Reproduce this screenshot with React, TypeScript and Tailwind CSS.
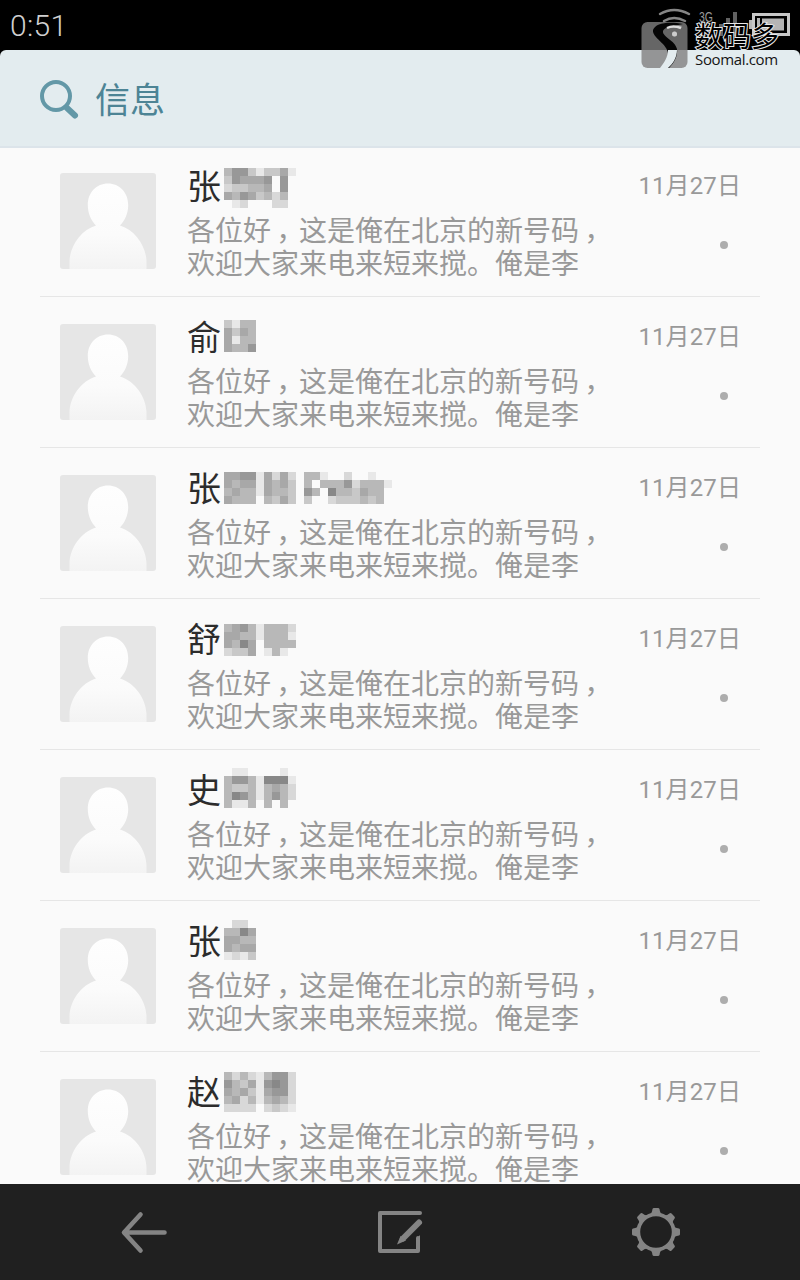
import { ReactNode } from "react"

type Thread = {
  name: string
  // shift of the mosaic inside the name line
  offset: number
  // one hex digit per 8px cell, f is left empty
  mosaic: string[]
}

const threads: Thread[] = [
  { name: "张", offset: 4, mosaic: ["b99ceccae", "c9aaa9f9f", "dccbbaf9f", "ab9acbdbf", "fedfffddf"] },
  { name: "俞", offset: 5, mosaic: ["cebb", "acab", "aebb", "abb9"] },
  {
    name: "张",
    offset: 6,
    mosaic: ["aa99eadadfbbeffdffeff", "abaaeabacfbfbbb9dbbbe", "babbeabbcf9bf8bbcabbf", "abbbfbcacfcffdcccbcbf"],
  },
  { name: "舒", offset: 7, mosaic: ["ba9bebbbd", "aabbebbbe", "ab8afbbbb", "dccafebef"] },
  { name: "史", offset: 0, mosaic: ["feeffffef", "b99be888e", "bccbebabd", "b89beb9bd", "beebfbfbf"] },
  { name: "张", offset: 1, mosaic: ["fddf", "bb8a", "aabb", "abaa", "edec"] },
  { name: "赵", offset: 2, mosaic: ["bdbdeb99d", "9bcae989d", "abacea99d", "badbebabd", "ddddfdcde"] },
]

function Mosaic({ rows, offset }: { rows: string[]; offset: number }) {
  return (
    <div style={{ marginTop: offset }}>
      {rows.map((row, y) => (
        <div key={y} className="flex h-2">
          {row.split("").map((c, x) => (
            <div
              key={x}
              className="h-2 w-2"
              style={{ backgroundColor: c === "f" ? "transparent" : `#${c}8${c}8${c}8` }}
            />
          ))}
        </div>
      ))}
    </div>
  )
}

function Avatar() {
  return (
    <svg className="mt-[27px] h-24 w-24 shrink-0 rounded-[3px]" viewBox="0 0 96 96">
      <defs>
        <linearGradient id="body" x1="0" y1="0" x2="0" y2="1">
          <stop offset="0" stopColor="#fefefe" />
          <stop offset="0.6" stopColor="#fbfbfb" />
          <stop offset="1" stopColor="#f3f3f3" />
        </linearGradient>
      </defs>
      <rect width="96" height="96" fill="#e6e6e6" />
      <path
        d="M48 10.500C36.500 10.500 27.800 19.500 27.800 32c0 8 3.200 15.500 8.200 20.500C21 57 10 73 9.500 88v8h77v-8C86 73 75 57 60 52.500c5-5 8.200-12.500 8.200-20.500C68.200 19.500 59.500 10.500 48 10.500z"
        fill="url(#body)"
      />
    </svg>
  )
}

// the TC face centres the comma in its cell, it only has to go down to the baseline
function Comma() {
  return <span className="relative -left-[2px] top-[8px] font-['Noto_Sans_CJK_TC',sans-serif]">，</span>
}

function Row({ thread }: { thread: Thread }) {
  return (
    <div className="mx-[40px] flex h-[151px] shrink-0 border-b border-[#e6e6e6] px-[20px]">
      <Avatar />
      <div className="ml-[31px] w-[440px] pt-[18px]">
        <div className="flex h-[49px] items-start">
          <div className="w-[37px] text-[34px] leading-[46px] text-[#2c2c2c]">{thread.name}</div>
          <Mosaic rows={thread.mosaic} offset={thread.offset} />
        </div>
        <p className="whitespace-nowrap text-[28px] font-normal leading-[33px] text-[#999999]">
          各位好
          <Comma />
          这是俺在北京的新号码
          <Comma />
          <br />
          欢迎大家来电来短来搅。俺是李
        </p>
      </div>
      <div className="flex flex-1 flex-col items-end pt-[24px]">
        <div className="-mr-px whitespace-nowrap text-[24px] font-normal leading-8 tracking-[0.1px] text-[#999999]">11月27日</div>
        <div className="mr-[12px] mt-[39px] h-2 w-2 rounded-full bg-[#adadad]" />
      </div>
    </div>
  )
}

function StatusBar() {
  return (
    <div className="flex h-[50px] shrink-0 items-start justify-between bg-black">
      <span className="ml-[10px] mt-[7px] font-[Roboto] text-[30px] font-light leading-[38px] tracking-[0.3px] text-[#d0d0d0]">0:51</span>
      <svg className="h-[50px] w-[150px]" viewBox="650 0 150 50" fill="none">
        <g stroke="#858585" strokeWidth="2.500" strokeLinecap="round">
          <path d="M660 14q14-8 29 0" />
          <path d="M664 21q10-6 21 0" />
          <path d="M668 27q6-3 13 0" />
        </g>
        <circle cx="674.500" cy="34" r="2.500" fill="#ccc" />
        <text x="699" y="22" fontFamily="Liberation Sans" fontSize="14" fill="#9a9a9a" textLength="14" lengthAdjust="spacingAndGlyphs">3G</text>
        <g fill="#626262">
          <path d="M719 24h4v12h-4zM726 18h4v18h-4zM733 12h4v24h-4z" />
        </g>
        <path d="M749 20h4v9h-4z" fill="#b8b8b8" />
        <rect x="753.500" y="14.500" width="35" height="20" fill="#000" stroke="#c8c8c8" strokeWidth="3" />
        <rect x="757" y="18" width="28" height="13" fill="#b5b5b5" />
        <path d="M761 17.500h24v14h-24z" stroke="#000" strokeWidth="2" />
      </svg>
    </div>
  )
}

function Header() {
  return (
    <div className="shrink-0 bg-black">
      <div className="flex h-[98px] items-center rounded-t-[6px] border-b-2 border-[#dce4ea] bg-[#e3ecef] pl-[38px] pt-[4px]">
        <svg className="h-[42px] w-[42px]" viewBox="0 0 42 42" fill="none" stroke="#6398a7">
          <circle cx="18" cy="17" r="14" strokeWidth="4" />
          <path d="M29 29l8 7.500" strokeWidth="6" strokeLinecap="round" />
        </svg>
        <h1 className="ml-[15px] mt-[4px] text-[35px] font-normal leading-[50px] text-[#4d8495]">信息</h1>
      </div>
    </div>
  )
}

function Watermark() {
  return (
    <div className="absolute left-[641px] top-[21px] flex">
      <svg className="h-12 w-[47px]" viewBox="0 0 47 48">
        <rect x="0.500" y="1" width="46" height="46" rx="6" fill="#808080" opacity="0.8" />
        <path d="M42 3C28 0 14 2 12 9c-1 8 15 14 15 24 0 6-4 10-7 14h8c5-5 9-12 8-19C34 19 21 16 22 10c1-4 10-5 20-7z" fill="#050505" />
        <path d="M27 29c0 7-4 13-8 18h8c5-4 9-11 9-18z" fill="#e3ecef" />
        <path d="M26 7q6-3 14 0" stroke="#ddd" strokeWidth="2.500" fill="none" />
        <circle cx="33.500" cy="13" r="2.500" fill="#ccc" />
      </svg>
      <div className="ml-[7px]">
        <div className="h-[29px] whitespace-nowrap text-[28px] leading-[34px] text-black [-webkit-text-stroke:2px_#e8e8e8] [paint-order:stroke_fill]">
          数码多
        </div>
        <div className="font-['Open_Sans'] text-[15px] leading-[18px] tracking-[-0.35px] text-[#151515]">Soomal.com</div>
      </div>
    </div>
  )
}

function NavButton({ children }: { children: ReactNode }) {
  return (
    <button className="flex h-24 w-[256px] items-center justify-center">
      <svg className="h-[52px] w-[52px]" viewBox="0 0 52 52" fill="none" stroke="#848484" strokeWidth="4" strokeLinecap="round" strokeLinejoin="round">
        {children}
      </svg>
    </button>
  )
}

function BottomBar() {
  return (
    <div className="flex h-24 shrink-0 justify-center bg-[#202020]">
      <NavButton>
        <path d="M46.500 26.500H6.500M22.500 8.500L6 26.500L22.500 44.500" strokeWidth="4.600" />
      </NavButton>
      <NavButton>
        <path d="M46 7H6v38h38V32" />
        <path d="M46 29l-4 5v3h4z" fill="#848484" stroke="none" />
        <path d="M45 16.500L29 32.500" strokeWidth="6" />
        <path d="M26.500 30L23 38.500l9-4z" fill="#848484" stroke="none" />
      </NavButton>
      <NavButton>
        <circle cx="26" cy="26" r="17.700" strokeWidth="3.800" />
        {[0, 45, 90, 135, 180, 225, 270, 315].map((a) => (
          <path
            key={a}
            d="M18.500 9.500Q22 8 22.500 3Q22.800 2 24 2h4q1.200 0 1.500 1Q30 8 33.500 9.500z"
            transform={`rotate(${a} 26 26)`}
            fill="#848484"
            stroke="none"
          />
        ))}
      </NavButton>
    </div>
  )
}

export default function App() {
  return (
    <div className="relative flex h-[1280px] w-[800px] flex-col overflow-hidden bg-[#fafafa] font-[Roboto,'Noto_Sans_CJK_SC',sans-serif]">
      <StatusBar />
      <Header />
      <div className="-mt-[2px] flex min-h-0 flex-1 flex-col overflow-hidden">
        {threads.map((thread, i) => (
          <Row key={i} thread={thread} />
        ))}
      </div>
      <BottomBar />
      <Watermark />
    </div>
  )
}
